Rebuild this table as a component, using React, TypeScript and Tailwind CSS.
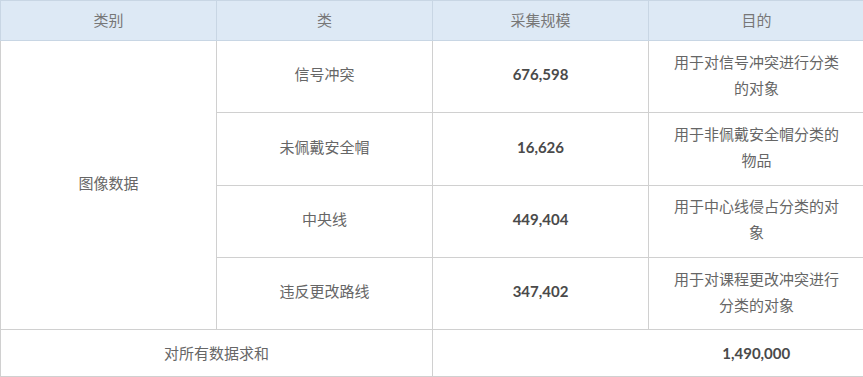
const rows = [
  { name: "信号冲突", count: "676,598", purpose: "用于对信号冲突进行分类的对象" },
  { name: "未佩戴安全帽", count: "16,626", purpose: "用于非佩戴安全帽分类的物品" },
  { name: "中央线", count: "449,404", purpose: "用于中心线侵占分类的对象" },
  { name: "违反更改路线", count: "347,402", purpose: "用于对课程更改冲突进行分类的对象" },
];

export default function App() {
  return (
    <div
      className="w-[863px] h-[377px] overflow-hidden bg-white text-[15px] text-[#666]"
      style={{ fontFamily: 'Lato, "Noto Sans CJK SC", sans-serif' }}
    >
      <table className="w-[864px] table-fixed border-collapse">
        <colgroup>
          <col className="w-[216px]" />
          <col className="w-[216px]" />
          <col className="w-[216px]" />
          <col className="w-[216px]" />
        </colgroup>
        <thead>
          <tr className="h-[40px] bg-[#dde9f5] text-[#777]">
            {["类别", "类", "采集规模", "目的"].map((h) => (
              <th
                key={h}
                className="border border-[#c8d6e4] font-normal text-center"
              >
                {h}
              </th>
            ))}
          </tr>
        </thead>
        <tbody>
          {rows.map((r, i) => (
            <tr key={r.name} className="h-[72.3px]">
              {i === 0 && (
                <td
                  rowSpan={4}
                  className="border border-[#d0d0d0] text-center align-middle pb-1"
                >
                  图像数据
                </td>
              )}
              <td className="border border-[#d0d0d0] text-center pb-1">{r.name}</td>
              <td className="border border-[#d0d0d0] text-center font-bold text-[#4a4a4a] pb-1">
                {r.count}
              </td>
              <td className="border border-[#d0d0d0] text-center px-5 leading-[26px] pb-1">
                {r.purpose}
              </td>
            </tr>
          ))}
          <tr className="h-[46.5px]">
            <td colSpan={2} className="border border-[#d0d0d0] text-center">
              对所有数据求和
            </td>
            <td colSpan={2} className="border border-[#d0d0d0]">
              <div className="grid grid-cols-2">
                <div />
                <div className="text-center font-bold text-[#4a4a4a]">
                  1,490,000
                </div>
              </div>
            </td>
          </tr>
        </tbody>
      </table>
    </div>
  );
}
